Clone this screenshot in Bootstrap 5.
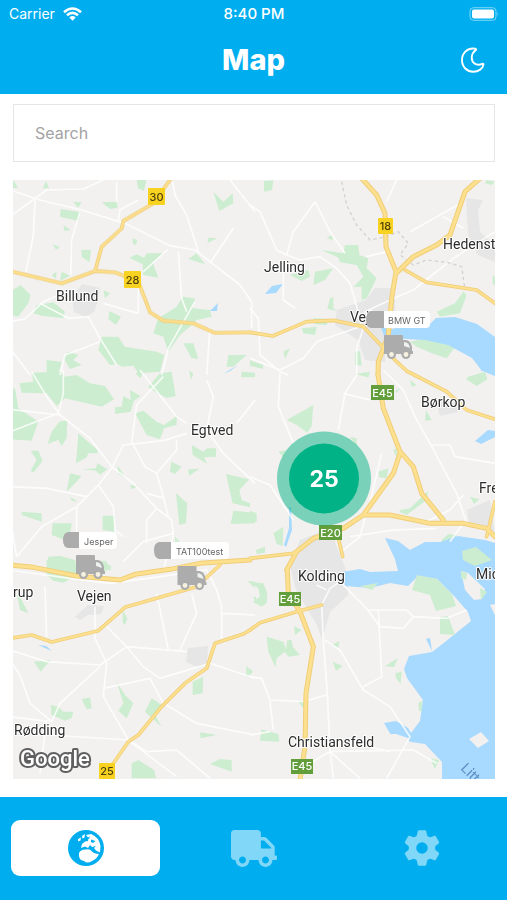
<!DOCTYPE html>
<html lang="en">
<head>
<meta charset="utf-8">
<meta name="viewport" content="width=device-width, initial-scale=1">
<title>Map</title>
<link href="https://cdn.jsdelivr.net/npm/bootstrap@5.3.0/dist/css/bootstrap.min.css" rel="stylesheet">
<style>
  body { font-family: Inter, "Liberation Sans", sans-serif; background: #fff; }
  .brand-bg { background: #00aeef; color: #fff; }
  .status-row { font-size: 14px; line-height: 20px; padding: 4px 8px 0 9px; }
  .status-time { font-size: 15px; font-weight: 500; }
  .title-row { height: 70px; padding: 2px 20px 0; }
  .screen-title { font-size: 29px; line-height: 36px; font-weight: 800; }
  .side-slot { width: 28px; }
  .main-pad { padding: 10px 12px 18px 13px; gap: 18px; }
  .search-box { height: 58px; border: 1px solid #e6e6e6; padding: 0 21px; font-size: 16px; }
  .search-box::placeholder { color: #a3a3a3; }
  .map-area { min-height: 400px; background: #f2f1ef; }
  .map-area svg { width: 100%; height: 100%; flex: 1; }
  .tab-row { padding: 23px 11px 24px; gap: 19px; }
  .tab-btn { height: 56px; border-radius: 9px; color: #80d7f7; }
  .tab-btn.is-on { background: #fff; color: #00aeef; }
  .gr { fill: #cdedd0; }
  .wa { fill: #a8d9ff; }
  .ur { fill: #e6e6e7; }
  .land { fill: #f2f1ef; }
  .mi { fill: none; stroke: #fff; stroke-width: 5; stroke-linejoin: round; opacity: .8; }
  .dash { fill: none; stroke: #d2d2d2; stroke-width: 4; stroke-dasharray: 10 9; }
  .edge { --road: #f0cd78; --thin: 11; --wide: 15; }
  .core { --road: #fde08e; --thin: 6; --wide: 9; }
  .road { fill: none; stroke: var(--road); stroke-width: var(--thin); stroke-linejoin: round; stroke-linecap: round; }
  .road.big { stroke-width: var(--wide); }
  .town { font-family: Roboto, Inter, sans-serif; font-size: 14px; fill: #2c2c2c; stroke: #fff; stroke-width: 2px; stroke-linejoin: round; paint-order: stroke; }
  .shield { font-size: 11px; font-weight: 500; text-anchor: middle; }
  .tag-name { font-size: 9px; fill: #666; }
  .logo-word { font-family: Roboto, Inter, sans-serif; font-size: 22px; font-weight: 500; fill: #fff; stroke: #606060; stroke-width: 4px; stroke-linejoin: round; paint-order: stroke; }
</style>
<script src="https://cdn.jsdelivr.net/npm/bootstrap@5.3.0/dist/js/bootstrap.bundle.min.js"></script>
</head>
<body>
<div class="d-flex flex-column min-vh-100">
  <header class="brand-bg">
    <div class="status-row d-flex justify-content-between align-items-center">
      <div class="col d-flex align-items-center gap-2">
        <span>Carrier</span>
        <svg width="19" height="14" viewBox="0 0 19 14" fill="none" stroke="#fff" stroke-width="2.6" aria-hidden="true"><path d="M1 5.200Q9.500-2.200 18 5.200M4 8.300Q9.500 3.600 15 8.300"/><path d="M6.300 10.400Q9.500 7.600 12.700 10.400L9.500 13.800Z" fill="#fff" stroke="none"/></svg>
      </div>
      <span class="status-time">8:40 PM</span>
      <div class="col d-flex justify-content-end">
        <svg width="30" height="14" viewBox="0 0 30 14" aria-hidden="true"><rect x="1" y=".7" width="26" height="12.600" rx="3.500" fill="none" stroke="#80d7f7"/><rect x="3" y="2.600" width="22" height="8.800" rx="1.800" fill="#fff"/><path d="M28.300 5Q30 7 28.300 9Z" fill="#80d7f7"/></svg>
      </div>
    </div>
    <div class="title-row d-flex justify-content-between align-items-center">
      <span class="side-slot"></span>
      <h1 class="screen-title m-0">Map</h1>
      <button type="button" class="btn p-0 border-0 side-slot" aria-label="Dark mode">
        <svg width="26" height="26" viewBox="0 0 26 26" fill="none" stroke="#fff" stroke-width="1.900" stroke-linejoin="round" aria-hidden="true"><path d="M15.500 1.800C7 .2 2 6.500 2 13C2 20 7 24.700 13.300 24.700C18.500 24.700 23 21.500 23.500 17.500C23.500 16.800 23 16.600 22.300 16.900C16 19.500 11.300 15.500 11.800 9.800C12 6.500 13.800 4.500 15.800 3C16.400 2.500 16.200 2 15.500 1.800Z"/></svg>
      </button>
    </div>
  </header>

  <main class="main-pad d-flex flex-column flex-grow-1">
    <input type="search" class="form-control rounded-0 shadow-none search-box" placeholder="Search" aria-label="Search">
    <div class="map-area d-flex flex-grow-1">
      <svg viewBox="13 180 482 599" preserveAspectRatio="xMidYMid slice" role="group" aria-label="Map">
        <defs>
          <g id="truck"><path fill-rule="evenodd" d="M1 0H18Q19 0 19 1V5H22Q27 6 28 12V16H29V19H26A4 4 0 0 1 18 19H11.500A4 4 0 0 1 3.500 19H0V1Q0 0 1 0Z"/><circle cx="7.500" cy="19.500" r="4.500"/><circle cx="22" cy="19.500" r="4.500"/><circle cx="7.500" cy="19.500" r="2.400" fill="#f7f1e0"/><circle cx="22" cy="19.500" r="2.400" fill="#f7f1e0"/><path d="M20 7Q25 7 26 13L20 11Z" fill="#eef2ee"/></g>
        </defs>

        <!-- woods -->
        <g class="gr">
          <g transform="translate(10 175) scale(.33333)"><path d="M0 5L10 15L24 38L8 40ZM107 18L118 40L99 40ZM380 12H410L402 48L384 40ZM152 102L212 112L205 138L150 125ZM190 80L215 82L204 98ZM275 82L320 80L323 98L300 102ZM610 50L640 80L668 55L670 85L628 108ZM160 150L182 165L163 168ZM128 207L150 217L138 224ZM214 224L243 225L238 262L215 245ZM368 190L382 195L378 210L368 206ZM594 188L622 190L593 204ZM358 248L380 238L402 248L410 235L460 235L428 262L445 308L400 300L398 268ZM535 252L560 235L585 268ZM155 290L180 302L150 318ZM280 345L300 355L285 370ZM125 300L140 290L138 312ZM32 330L62 360L55 385L25 425L0 420V350ZM80 390L130 382L165 410L160 430L95 422L70 415ZM298 408L333 425L318 450L295 432ZM518 365L555 370L548 400L600 405L605 425L560 435L540 455L510 480L475 530L460 485L430 475L445 430L500 395ZM275 485H325L345 515L440 530L463 540L450 590L385 595L370 572L335 575L325 568L300 570L265 525ZM520 505L550 505L565 552L545 550ZM160 550L175 530L205 540L190 555L215 570L180 582ZM110 555L155 560L145 600H110ZM655 540L710 540L670 575L650 575Z"/></g>
          <g transform="translate(250 175) scale(.33333)"><path d="M42 18L70 16L66 45L42 50ZM230 190L245 180L250 195ZM215 225L280 235L285 210L325 210L328 240L355 250L350 280L380 310L350 370L335 375L335 335L310 335L340 305L320 270L270 262L265 248ZM195 290L250 280L225 315L190 330ZM120 300L175 285L180 305L155 318ZM240 370L250 365V400L262 408L232 402ZM560 410L615 385L640 350L650 360L630 415L570 425ZM710 15L735 20L725 30L705 25ZM480 500L540 487L620 510L590 550L545 535L500 515ZM315 530L330 528L335 572L315 570ZM155 460L200 455L195 480L160 475ZM100 530L120 520L105 552ZM0 556L40 570L38 582L0 572ZM728 300L738 310V335L728 325ZM190 430L235 432L230 450L195 448Z"/></g>
          <g transform="translate(10 370) scale(.33333)"><path d="M0 60L15 55L25 115L85 155L65 212L0 208ZM28 40L70 35L65 8L155 5L165 20L200 15L240 40L285 48L312 88L275 110L165 85L140 108L110 70L35 68ZM415 50L450 10L485 5L497 78L470 84L435 65ZM385 0L400 10L390 25L378 12ZM360 60L392 78L372 92L362 125L315 132L315 112L335 110L340 78L362 90ZM375 130L400 122L440 155L462 165L500 138V165L462 175L450 208L410 195ZM538 0L550 12L542 30ZM695 5L735 8V22L693 22ZM148 155L172 150L170 205L155 228L145 210L113 222L125 185ZM205 190L262 240V250L235 250L230 262L198 280ZM62 242L85 242L98 272L70 308L62 302L80 270ZM215 298L258 295L262 280L292 298L270 314L258 302ZM180 310L215 318L190 345L170 365ZM322 285L348 325L325 312ZM35 425L95 430V455L35 435ZM180 380L203 395L185 392ZM278 437H315L312 485L278 480ZM128 460H185L178 515L125 495ZM545 225L580 245L592 235H618V260L582 262L592 282L548 255ZM484 275L515 290L495 312L480 305ZM535 298L568 296L537 318ZM648 312L718 328L688 360L695 390L720 400V412L668 400ZM670 422L735 428V460L662 462ZM498 370L532 400L528 460L508 465ZM360 345L385 348L365 358ZM115 560L150 558L195 570L200 600H110ZM285 570L305 600H275ZM495 500L510 515L495 515Z"/></g>
          <g transform="translate(250 370) scale(.33333)"><path d="M315 12L360 5L355 22ZM110 150L190 105L185 168L172 188L140 165ZM655 20L705 5L712 28L680 48L648 28ZM528 120L545 150L525 152ZM480 30L500 45L485 50ZM300 200L320 205V230ZM385 305L415 295L410 325L388 322ZM450 420L480 415L535 362L530 390L470 435L448 425ZM660 380L688 388L672 402ZM0 422L20 430V455L0 455ZM70 490L100 470L98 528L80 522ZM575 510L595 492L620 495L610 520L580 532ZM85 245L108 240L100 262ZM18 540L45 530V548L20 552ZM436 62L450 55L440 70ZM430 240L440 235L440 265Z"/></g>
          <g transform="translate(10 560) scale(.33333)"><path d="M110 0H195L200 45L160 68L130 62L110 45ZM275 0L305 20L280 38ZM20 100L35 120L55 160L30 150ZM338 150L352 175L345 195L338 188ZM72 305L122 300L92 335ZM215 418L240 412L245 445L230 448ZM122 435L145 440L160 455L190 455L185 475L165 482L125 465ZM320 365L345 405L370 430L350 475L325 452L340 430ZM425 415L455 435L435 465L455 500L405 455ZM548 365L580 350L578 400L548 405ZM708 318L728 335L710 352ZM570 517L620 525L572 535ZM600 612L630 597L665 600V635ZM365 610L385 600L400 610L432 630L438 655H365ZM712 62L735 65V85ZM730 110L738 110V130Z"/></g>
          <g transform="translate(250 560) scale(.33333)"><path d="M0 65L40 70L52 100L50 130L35 140L8 125L30 110L25 85ZM50 230L100 245L108 268L112 240L125 240L128 260L150 285L115 290L105 275L80 295L76 322L55 275ZM132 198L155 210L135 225ZM245 255L268 243L265 265ZM248 305L278 318L258 333ZM405 318L443 295L432 322ZM436 340L455 335L452 372L438 355ZM35 508L85 522L88 545L30 542ZM145 425L165 420L160 445ZM540 595L567 600L555 628ZM505 430L518 420L515 455L507 452ZM0 325L8 335L0 345Z"/></g>
        </g>

        <!-- towns -->
        <g class="ur">
          <path d="M72 298L82 284L100 288L98 300L94 312L86 317L74 312ZM75 617L88 605L104 606L101 614L88 615L80 620ZM188 648L208 646L207 664L200 668L186 662Z"/>
          <path d="M337 310L366 300L375 288H395V310L402 330L385 342V362L365 360L358 340L335 325ZM466 198L483 200L478 210L480 232L495 245V262L478 255L468 235ZM300 540L330 528L338 550L348 575L348 595L330 612L322 640L317 625L308 610L296 590L290 565ZM467 510L490 500L495 535L480 525L470 528ZM436 402H458V412L440 416Z"/>
        </g>

        <!-- water -->
        <g class="wa">
          <path d="M265 294L272 286L283 284L276 293ZM210 311L218 303L217 311ZM223 374L238 365L230 371ZM380 325L390 330L407 324H430L436 318L455 317L477 324L495 337V374L482 371L472 358L448 345L425 340L385 338ZM475 441L488 430L495 431V437L481 444ZM289 507L291 507L292 530L286 547L284 545L289 528ZM38 645L46 646L52 651ZM480 370H495V376Z"/>
          <path d="M385 538L398 541L410 550L425 542L440 542L458 536L485 540L495 543V779H442V762L425 744L411 742L391 735L384 723L396 721L408 728L411 733L420 721L423 700L407 678L404 669L409 656L432 652L445 642L471 621L468 612L455 597L437 579L418 576L408 586L390 583L370 588L345 586L342 572L360 569L370 572L398 571L395 559Z"/>
        </g>
        <path class="land" d="M461 571L468 573L485 589L482 599L474 600L465 590ZM490 605L495 604V615ZM469 739L481 732L489 741L478 748ZM396 734L388 734L384 738L390 745L410 744L408 738Z"/>
        <path class="gr" d="M412 590L417 575L437 579L452 594L456 606L436 611L430 595ZM440 617L448 616L455 635L440 634ZM461 571L467 573L466 580L461 578ZM480 588L487 592L481 600ZM462 551L476 547L492 560L475 566L463 560ZM360 586L378 583L372 590Z"/>
        <path class="wa" d="M426 639L430 638L432 651Z"/>

        <!-- minor roads -->
        <g class="mi">
          <g transform="translate(10 175) scale(.33333)"><path d="M0 45L90 75L215 105L345 145L480 212L555 225L690 330L725 380V460M0 125L110 45L220 42L280 15M325 140L330 105L385 75M488 20L495 60L530 120L565 230M90 385L175 430L235 425L270 490L320 570M0 440L45 432L100 380L180 345M210 110L185 195L182 300M75 75L70 180L48 290M475 222L400 290M555 380L475 520L455 600M385 310V415L280 385M660 15L735 110M505 230L515 370L530 410M0 520L60 600M150 600L165 540L270 500M600 265L670 160M600 460L590 600M320 20V80"/></g>
          <g transform="translate(250 175) scale(.33333)"><path d="M0 90L30 110L80 225L110 240L150 255L210 245L260 280L300 325L330 430M195 80L240 170L285 235M195 80L130 170L110 240M330 450L345 410L420 375L490 345L610 250L735 170M330 455L200 500L160 550L90 585L0 550M100 290L100 375L135 400M340 460L320 520V600M410 80L440 15M480 170L570 120L640 80M640 160L580 125M350 245L410 230M0 400L25 430L30 540L90 590L115 600"/></g>
          <g transform="translate(10 370) scale(.33333)"><path d="M65 5L110 80L150 135L240 205L305 290L370 340L440 415L485 450L490 495L460 600M160 0V70L145 130L0 185M0 118L150 135M530 190L460 212L340 225L305 295L265 345L200 410L95 470L20 560M390 0L500 140L530 160M460 20L380 105L365 215L405 290L440 310L500 240V210M440 310L460 380L475 440M265 345L310 410L315 480L340 500M0 350L110 355L230 380M200 410V500M340 575L400 515L490 490M410 370L465 385M440 415L410 450V520M590 30L610 80L590 180L640 250L735 340M680 160L735 90M0 440L20 560"/></g>
          <g transform="translate(250 370) scale(.33333)"><path d="M90 10L85 110L130 220M320 15L285 70L265 180M280 70L360 90M400 0L460 60L495 140L540 220L620 370L650 460M540 225L600 225L615 260L735 280M0 320L60 345L130 450M300 500L430 480L560 475M345 445L330 500L280 540M395 250L350 440M520 460L600 420L640 375M600 515L640 460"/></g>
          <g transform="translate(10 560) scale(.33333)"><path d="M0 30L180 55L300 70L450 50L590 30L620 90L635 140V250M105 80L110 230M255 140V235L290 310L280 410L355 540M0 270L110 305L270 315L350 260L530 275M290 200L350 260M440 100L475 270M545 100L560 160L510 270M350 260L400 320L450 355L600 310L735 355M280 385L420 355L460 430L560 490L735 525M0 300L30 345L60 430L125 485L150 430L270 320M110 480L90 640M0 470L120 485M120 525L355 540L410 575L500 570L600 655M635 160L735 165M360 545L500 650"/></g>
          <g transform="translate(250 560) scale(.33333)"><path d="M270 65L240 85L215 135L220 240L232 400L240 570L250 655M270 65L350 145L390 200L460 205L490 170L590 175L650 150M355 150L470 150L490 170M225 240L270 270L340 390L420 440L480 530L410 655M385 150L395 350L340 380M0 350L35 355L60 420L160 425L230 405M60 425L70 510M240 575L160 620M240 575L330 655M240 575L490 570L560 610M240 535L420 575M200 75L230 90M0 525L60 515"/></g>
        </g>
        <g transform="translate(250 175) scale(.33333)"><path class="dash" d="M275 20L290 90L320 150L360 195L410 185L445 170L475 205L450 240L490 270L530 255L590 262L635 275L645 345"/></g>

        <!-- main roads: casing, then a lighter centre -->
        <g class="edge"><g id="mainRoads">
          <g transform="translate(10 175) scale(.33333)"><path class="road" d="M483 10L430 85L340 138L335 160L275 215L255 288M0 288L155 325L255 288L315 292L385 320L420 412L460 437L550 445L615 474L720 472"/></g>
          <g transform="translate(250 175) scale(.33333)"><path class="road" d="M0 472L68 483L170 440L250 436L340 455L440 560L470 588L590 650M465 285L530 322L680 345L735 385"/><path class="road big" d="M335 10L380 60L405 115L408 215L438 290L425 370L415 480L385 560L384 600M690 10L645 50L600 180L560 210L490 245L438 295"/></g>
          <g transform="translate(250 370) scale(.33333)"><path class="road" d="M590 65L650 120L735 148M0 565L130 550L200 500M735 395L710 500M262 490L278 560"/><path class="road big" d="M384 15L400 115L450 245L490 290L515 370L580 450M450 250L430 310L340 435L280 475L190 505L140 545L110 600M340 435L420 435L540 460H640L710 475L735 500"/></g>
          <g transform="translate(10 560) scale(.33333)"><path class="road big" d="M0 15L70 22L200 48L330 60L375 43L480 28L570 10L720 0"/><path class="road" d="M0 235L65 225L125 246L265 212L345 142L560 80L630 15M720 210L700 222L615 250L590 325L525 370L455 440L385 525L355 545L300 625"/></g>
          <g transform="translate(250 560) scale(.33333)"><path class="road" d="M0 210L30 188L140 155L215 135"/><path class="road big" d="M112 30L115 100L150 155L190 260L168 400L165 560L150 660"/></g>
        </g></g>
        <use href="#mainRoads" class="core"/>

        <!-- road shields -->
        <g class="shield">
          <g fill="#f8d220"><rect x="148" y="188" width="17" height="17" rx="1"/><rect x="124" y="271" width="17" height="17" rx="1"/><rect x="378" y="218" width="15" height="16" rx="1"/><rect x="99" y="763" width="16" height="16" rx="1"/></g>
          <g fill="#4b3f0c"><text x="156.500" y="201">30</text><text x="132.500" y="284">28</text><text x="385.500" y="230">18</text><text x="107" y="775">25</text></g>
          <g fill="#629e3c"><rect x="371" y="385" width="23" height="15"/><rect x="319" y="525" width="23" height="15"/><rect x="279" y="592" width="22" height="14"/><rect x="291" y="759" width="22" height="15"/></g>
          <g fill="#fff"><text x="382.500" y="397">E45</text><text x="330.500" y="537">E20</text><text x="290" y="603">E45</text><text x="302" y="770">E45</text></g>
        </g>

        <!-- place names -->
        <g class="town">
          <text x="56" y="301">Billund</text><text x="264" y="272">Jelling</text><text x="443" y="249">Hedenst</text><text x="350" y="322">Vejle</text>
          <text x="421" y="407">Børkop</text><text x="191" y="435">Egtved</text><text x="479" y="493">Fre</text><text x="298" y="581">Kolding</text>
          <text x="77" y="601">Vejen</text><text x="13" y="597">rup</text><text x="476" y="579">Mid</text><text x="14" y="735">Rødding</text><text x="288" y="747">Christiansfeld</text>
        </g>
        <text transform="translate(460 769) rotate(45)" font-size="14" fill="#5c8fc4">Litt</text>

        <!-- vehicles -->
        <g fill="#acacac">
          <path d="M384 311H371Q366 312 366 320Q366 327 371 328H384ZM79 532H68Q63 533 63 540Q63 547 68 548H79ZM171 542H159Q154 543 154 550Q154 558 159 559H171Z"/>
          <use href="#truck" x="384" y="335"/><use href="#truck" x="76" y="555"/><use href="#truck" x="177.500" y="566"/>
        </g>
        <g fill="#fff"><path d="M384 311H426Q430 311 430 315V324Q430 328 426 328H384ZM79 532H113Q117 532 117 536V545Q117 549 113 549H79ZM171 542H225Q229 542 229 546V555Q229 559 225 559H171Z"/></g>
        <g class="tag-name"><text x="388" y="324">BMW GT</text><text x="84" y="545">Jesper</text><text x="176" y="555">TAT100test</text></g>

        <!-- cluster -->
        <circle cx="324" cy="478.500" r="47" fill="#00b285" opacity=".5"/>
        <circle cx="324" cy="478.500" r="35" fill="#00b285"/>
        <text x="324" y="487" text-anchor="middle" font-size="23" font-weight="700" fill="#fff">25</text>

        <text class="logo-word" x="20" y="766">Google</text>
      </svg>
    </div>
  </main>

  <nav class="brand-bg tab-row d-flex" aria-label="Main">
    <button type="button" class="btn border-0 p-0 col tab-btn is-on" aria-label="Map" aria-current="page">
      <svg width="36" height="36" viewBox="0 0 36 36" aria-hidden="true"><circle cx="18" cy="18" r="18" fill="currentColor"/><g fill="#fff"><path d="M11 23Q13 19 18 19.500Q22 18.500 24 21.500Q26 23.500 31 24Q29 29 24 31Q19 34 16 31Q10 30 11 23Z"/><path d="M13 18L14 14L17 11.500L20 11L20.500 8L18 5L23 4Q31 7 32.500 16L32 22.500L28 20.500L26 18L28 16L24 17L22 15L20 18L17 16.500Z"/><path d="M10 9L13 7.500L12.500 10.500L10 11.500ZM14 6L17 4L16.500 7.500L14.500 8.500Z"/></g><path d="M23 9.500L27.500 11L25 13L23 12ZM19 8L22 6.500L21 9Z" fill="currentColor"/></svg>
    </button>
    <button type="button" class="btn border-0 p-0 col tab-btn" aria-label="Vehicles">
      <svg width="46" height="37" viewBox="0 0 640 512" fill="currentColor" aria-hidden="true"><path d="M624 352h-16V243.900c0-12.700-5.100-24.900-14.100-33.900L494 110.100c-9-9-21.200-14.100-33.900-14.100H416V48c0-26.500-21.500-48-48-48H48C21.500 0 0 21.500 0 48v320c0 26.500 21.500 48 48 48h16c0 53 43 96 96 96s96-43 96-96h128c0 53 43 96 96 96s96-43 96-96h48c8.800 0 16-7.200 16-16v-32c0-8.800-7.200-16-16-16zM160 464c-26.500 0-48-21.500-48-48s21.500-48 48-48 48 21.500 48 48-21.500 48-48 48zm320 0c-26.500 0-48-21.500-48-48s21.500-48 48-48 48 21.500 48 48-21.500 48-48 48zm80-208H416V144h44.100l99.900 99.900V256z"/></svg>
    </button>
    <button type="button" class="btn border-0 p-0 col tab-btn" aria-label="Settings">
      <svg width="36" height="36" viewBox="-18 -18 36 36" fill="currentColor" aria-hidden="true"><circle r="9.500" fill="none" stroke="currentColor" stroke-width="7.500"/><g id="teeth"><path id="tooth" d="M-5.500-11L-4.200-17Q-4-17.800-3.200-17.800H3.200Q4-17.800 4.200-17L5.500-11Z"/><use href="#tooth" transform="rotate(60)"/><use href="#tooth" transform="rotate(120)"/></g><use href="#teeth" transform="rotate(180)"/></svg>
    </button>
  </nav>
</div>
</body>
</html>
